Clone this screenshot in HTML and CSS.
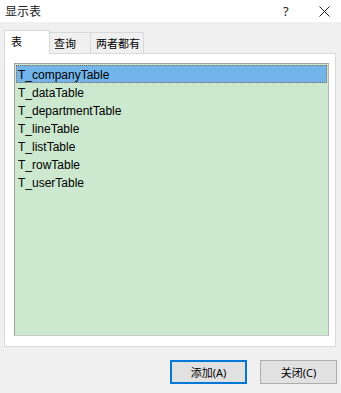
FILE: index.html
```html
<!DOCTYPE html>
<html lang="zh-CN">
<head>
  <meta charset="UTF-8">
  <link rel="stylesheet" href="styles.css">
  <title>显示表</title>
</head>
<body>
  <div class="titlebar">
    <span class="title">显示表</span>
    <span class="help">?</span>
    <span class="close-x">
      <svg width="11" height="11" viewBox="0 0 11 11"><path d="M0.5 0.5 L10.5 10.5 M10.5 0.5 L0.5 10.5" stroke="#222" stroke-width="1" fill="none"/></svg>
    </span>
  </div>

  <div class="dialog">
    <div class="tabs">
      <div class="tab active">表</div>
      <div class="tab">查询</div>
      <div class="tab">两者都有</div>
    </div>
    <div class="panel">
      <ul class="listbox">
        <li class="selected">T_companyTable</li>
        <li>T_dataTable</li>
        <li>T_departmentTable</li>
        <li>T_lineTable</li>
        <li>T_listTable</li>
        <li>T_rowTable</li>
        <li>T_userTable</li>
      </ul>
    </div>
    <div class="buttons">
      <button class="btn default">添加(A)</button>
      <button class="btn">关闭(C)</button>
    </div>
  </div>
</body>
</html>
```

FILE: styles.css
```css
body {
  margin: 0;
  width: 341px;
  height: 393px;
  background-color: #f0f0f0;
  font-family: "Noto Sans", "Noto Sans CJK SC", sans-serif;
  font-size: 12px;
  color: #000;
  overflow: hidden;
}

.titlebar {
  display: flex;
  align-items: center;
  height: 22px;
  background-color: #fff;
  padding-left: 5px;
}

.title {
  flex: 1;
  color: #222;
}

.help {
  width: 12px;
  margin-right: 24px;
  font-size: 13px;
  color: #222;
}

.close-x {
  display: flex;
  margin-right: 11px;
}

.dialog {
  padding: 8px 4px 0 4px;
}

.tabs {
  display: flex;
  align-items: flex-end;
  height: 23px;
  font-size: 11px;
}

.tab {
  box-sizing: border-box;
  height: 21px;
  padding: 0 4px;
  line-height: 21px;
  white-space: nowrap;
  border: 1px solid #d9d9d9;
  border-bottom: none;
  border-left: none;
  background-color: #f0f0f0;
}

.tab.active {
  width: 46px;
  height: 24px;
  margin-bottom: -1px;
  padding: 0 6px;
  line-height: 22px;
  border-left: 1px solid #d9d9d9;
  background-color: #fff;
  position: relative;
}

.tab:nth-child(2) {
  width: 41px;
}

.tab:nth-child(3) {
  width: 53px;
  padding: 0 5px;
}

.panel {
  box-sizing: border-box;
  width: 332px;
  height: 294px;
  background-color: #fff;
  border: 1px solid #d9d9d9;
  padding: 9px 6px 10px 9px;
}

.listbox {
  box-sizing: border-box;
  list-style: none;
  margin: 0;
  padding: 1px;
  width: 315px;
  height: 273px;
  font-family: "Liberation Sans", "Noto Sans CJK SC", sans-serif;
  background-color: #cce8cf;
  border: 1px solid #a0a0a0;
  border-right-color: #b5b5b5;
  border-bottom-color: #c8c8c8;
}

.listbox li {
  height: 18px;
  line-height: 21px;
  padding-left: 2px;
}

.listbox li.selected {
  box-sizing: border-box;
  background-color: #73b5ea;
  outline: 1px dotted #8a6a4a;
  outline-offset: -1px;
}

.buttons {
  display: flex;
  justify-content: flex-end;
  gap: 13px;
  margin-top: 13px;
}

.btn {
  box-sizing: border-box;
  width: 77px;
  height: 24px;
  margin: 0;
  padding: 0;
  font-family: "Noto Sans", "Noto Sans CJK SC", sans-serif;
  font-size: 11px;
  color: #000;
  background-color: #e1e1e1;
  border: 1px solid #adadad;
}

.btn.default {
  border: 2px solid #0078d7;
}
```
